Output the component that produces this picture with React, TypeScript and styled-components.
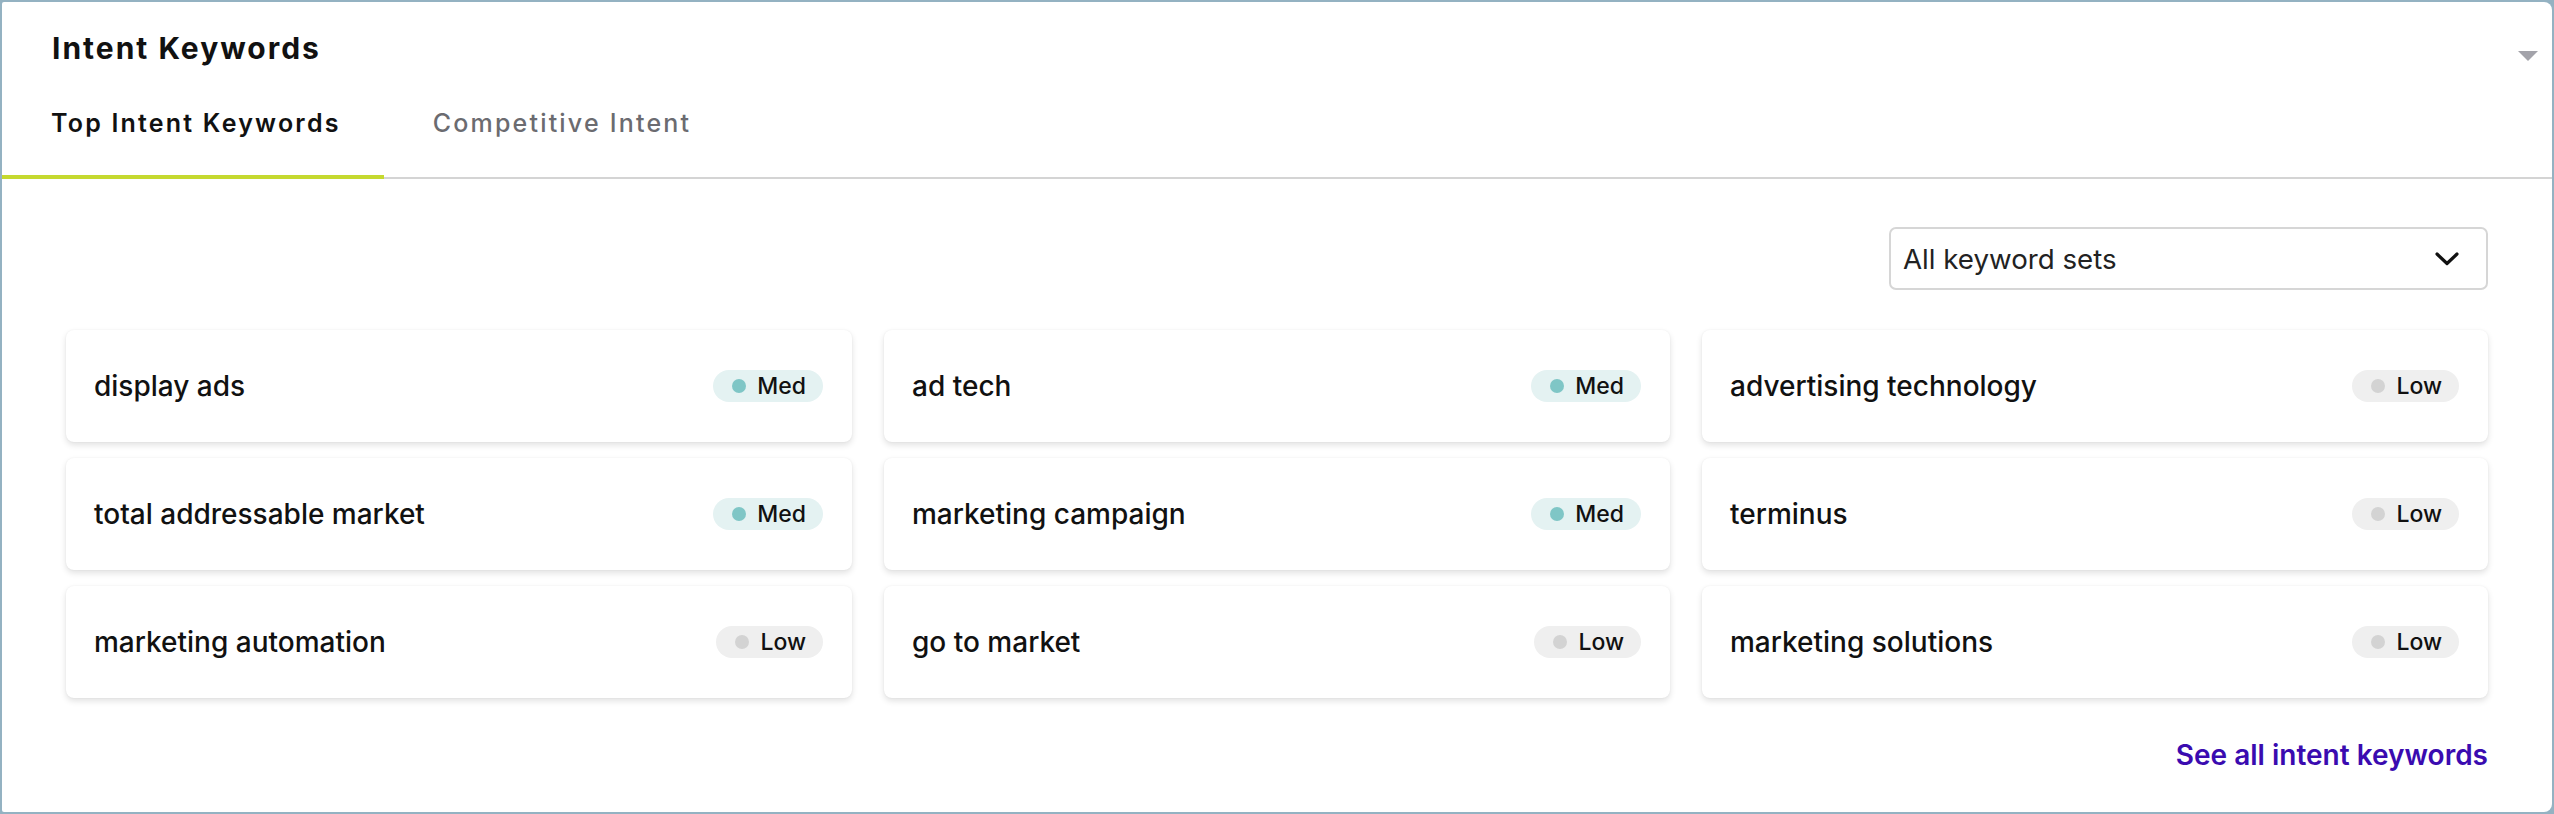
import React from "react";
import styled, { createGlobalStyle } from "styled-components";

const GlobalStyle = createGlobalStyle`
  html, body {
    margin: 0;
    padding: 0;
    background: #94b2c2;
  }
  body {
    font-family: Inter, "Noto Sans", Arial, sans-serif;
    color: #111;
    -webkit-font-smoothing: antialiased;
  }
  * { box-sizing: border-box; }
`;

const Page = styled.div`
  padding: 2px;
  width: 2554px;
  height: 814px;
`;

const Panel = styled.section`
  background: #fff;
  border-radius: 2px 8px 8px 2px;
  height: 810px;
  display: flex;
  flex-direction: column;
`;

const Header = styled.header`
  display: flex;
  justify-content: space-between;
  align-items: flex-start;
  padding: 28px 14px 0 50px;
`;

const Title = styled.h2`
  margin: 0;
  font-family: Inter, "Noto Sans", sans-serif;
  font-size: 30px;
  line-height: 36px;
  font-weight: 700;
  letter-spacing: 2px;
  color: #111;
`;

const Caret = styled.svg`
  margin-top: 21px;
  width: 20px;
  height: 10px;
  display: block;
`;

const TabBar = styled.nav`
  display: flex;
  margin-top: 42px;
  border-bottom: 2px solid #d4d4d4;
`;

const Tab = styled.button<{ $active?: boolean }>`
  appearance: none;
  background: none;
  border: none;
  margin: 0 0 -2px 0;
  padding: 0 43px 37px 49px;
  font-family: Inter, "Noto Sans", sans-serif;
  font-size: 25px;
  line-height: 30px;
  letter-spacing: 2.2px;
  font-weight: ${(p) => (p.$active ? 600 : 500)};
  color: ${(p) => (p.$active ? "#111" : "#6b6b70")};
  border-bottom: 4px solid ${(p) => (p.$active ? "#c5d92f" : "transparent")};
  cursor: pointer;
`;

const Body = styled.div`
  display: flex;
  flex-direction: column;
  padding: 48px 64px 40px 64px;
`;

const Toolbar = styled.div`
  display: flex;
  justify-content: flex-end;
`;

const Select = styled.button`
  appearance: none;
  width: 599px;
  height: 63px;
  border: 2px solid #d6d6d6;
  border-radius: 7px;
  background: #fff;
  display: flex;
  align-items: center;
  justify-content: space-between;
  padding: 0 27px 0 12px;
  font-family: Inter, "Noto Sans", sans-serif;
  font-size: 27.7px;
  color: #222;
  cursor: pointer;
`;

const Grid = styled.div`
  display: grid;
  grid-template-columns: repeat(3, 1fr);
  column-gap: 32px;
  row-gap: 16px;
  margin-top: 40px;
`;

const Card = styled.div`
  height: 112px;
  background: #fff;
  border-radius: 8px;
  box-shadow: 0 3px 6px rgba(0, 0, 0, 0.12), 0 0 2px rgba(0, 0, 0, 0.06);
  display: flex;
  align-items: center;
  justify-content: space-between;
  padding: 0 29px 0 28px;
`;

const Keyword = styled.span`
  font-size: 28px;
  font-weight: 500;
  color: #111;
`;

const Badge = styled.span<{ $level: "Med" | "Low" }>`
  display: inline-flex;
  align-items: center;
  gap: 11px;
  height: 32px;
  border-radius: 16px;
  padding: 0 17px 0 19px;
  background: ${(p) => (p.$level === "Med" ? "#e4f2f2" : "#efefef")};
  font-size: 23px;
  font-weight: 500;
  color: #111;
  &::before {
    content: "";
    width: 14px;
    height: 14px;
    border-radius: 50%;
    background: ${(p) => (p.$level === "Med" ? "#7fc6c6" : "#d3d3d3")};
  }
`;

const Footer = styled.div`
  display: flex;
  justify-content: flex-end;
  margin-top: 40px;
`;

const Link = styled.a`
  font-size: 28px;
  line-height: 34px;
  font-weight: 600;
  color: #3a0bb0;
  text-decoration: none;
  cursor: pointer;
`;

const keywords: { name: string; level: "Med" | "Low" }[] = [
  { name: "display ads", level: "Med" },
  { name: "ad tech", level: "Med" },
  { name: "advertising technology", level: "Low" },
  { name: "total addressable market", level: "Med" },
  { name: "marketing campaign", level: "Med" },
  { name: "terminus", level: "Low" },
  { name: "marketing automation", level: "Low" },
  { name: "go to market", level: "Low" },
  { name: "marketing solutions", level: "Low" },
];

export default function App() {
  return (
    <>
      <GlobalStyle />
      <Page>
        <Panel>
          <Header>
            <Title>Intent Keywords</Title>
            <Caret viewBox="0 0 20 10">
              <polygon points="0,0 20,0 10,10" fill="#a3a3aa" />
            </Caret>
          </Header>
          <TabBar>
            <Tab $active>Top Intent Keywords</Tab>
            <Tab>Competitive Intent</Tab>
          </TabBar>
          <Body>
            <Toolbar>
              <Select>
                <span>All keyword sets</span>
                <svg width="24" height="14" viewBox="0 0 24 14">
                  <polyline
                    points="2,2 12,11.5 22,2"
                    fill="none"
                    stroke="#111"
                    strokeWidth="3.2"
                    strokeLinecap="round"
                    strokeLinejoin="round"
                  />
                </svg>
              </Select>
            </Toolbar>
            <Grid>
              {keywords.map((k) => (
                <Card key={k.name}>
                  <Keyword>{k.name}</Keyword>
                  <Badge $level={k.level}>{k.level}</Badge>
                </Card>
              ))}
            </Grid>
            <Footer>
              <Link>See all intent keywords</Link>
            </Footer>
          </Body>
        </Panel>
      </Page>
    </>
  );
}
